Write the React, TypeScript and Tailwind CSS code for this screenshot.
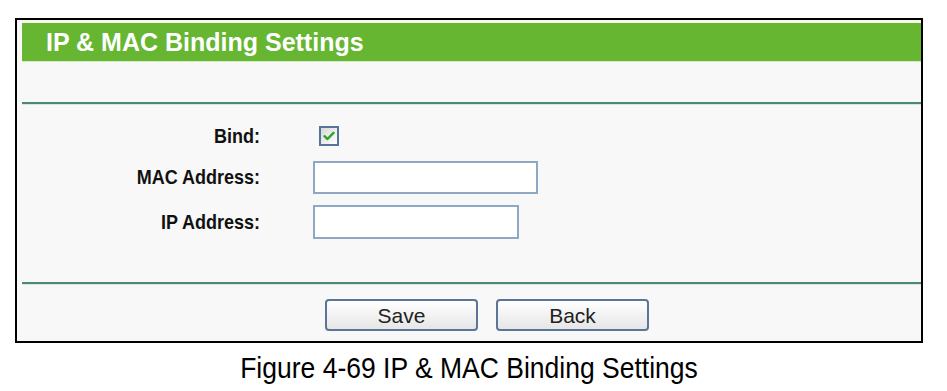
const App = () => {
    return (
        <div className="w-[947px] h-[391px] bg-white pt-[18px] pl-[15px] font-['Liberation_Sans',Arial,sans-serif]">
            {/* Router settings frame */}
            <div className="w-[908px] border-2 border-black bg-[#f8f8f8]">
                <div className="h-[3px] ml-[5px] bg-[#f6f8ea]" />
                <div className="ml-[5px] h-[38px] bg-[#66b632] flex items-center pl-[24px]">
                    <h1 className="text-white font-bold text-[25px] leading-none">IP &amp; MAC Binding Settings</h1>
                </div>
                <div className="ml-[5px] h-px bg-[#d3eac2]" />
                <div className="h-[40px]" />
                <div className="ml-[5px] h-[2px] bg-[#4b8a70]" />
                <div className="ml-[5px] h-px bg-[#d9e9e0]" />

                {/* Form rows */}
                <div className="ml-[5px] pt-[17px] pb-[43px] grid grid-cols-[238px_1fr] gap-x-[53px] gap-y-[11px] items-center">
                    <label className="text-right font-bold text-[18px] text-[#111] h-[28px] leading-[28px] scale-y-[1.15] origin-right">Bind:</label>
                    <div className="h-[28px] flex items-center">
                        <span className="ml-[6px] w-[20px] h-[20px] border-2 border-[#56759a] bg-gradient-to-br from-[#d8d8d8] to-white flex items-center justify-center">
                            <svg width="12" height="10" viewBox="0 0 12 10">
                                <path d="M1.5 5.2 L4.5 8 L10.5 1.8" fill="none" stroke="#2fa52a" strokeWidth="2.4" strokeLinecap="round" strokeLinejoin="round" />
                            </svg>
                        </span>
                    </div>
                    <label className="text-right font-bold text-[18px] text-[#111] scale-y-[1.15] origin-right">MAC Address:</label>
                    <input type="text" className="w-[225px] h-[33px] border-2 border-[#8ea7c5] bg-white outline-none" />
                    <label className="text-right font-bold text-[18px] text-[#111] scale-y-[1.15] origin-right">IP Address:</label>
                    <input type="text" className="w-[206px] h-[34px] border-2 border-[#8ea7c5] bg-white outline-none" />
                </div>

                <div className="ml-[5px] h-[2px] bg-[#4b8a70]" />
                <div className="ml-[5px] h-px bg-[#d9e9e0]" />

                {/* Buttons */}
                <div className="pl-[308px] pt-[14px] pb-[10px] flex gap-[18px]">
                    <button className="w-[153px] h-[32px] rounded-[4px] border-2 border-[#5a7596] bg-gradient-to-b from-white to-[#e6e6e6] text-[21px] text-[#222] leading-none">Save</button>
                    <button className="w-[153px] h-[32px] rounded-[4px] border-2 border-[#5a7596] bg-gradient-to-b from-white to-[#e6e6e6] text-[21px] text-[#222] leading-none">Back</button>
                </div>
            </div>

            <p className="w-[908px] text-center text-[26.5px] text-black mt-[12px] leading-none scale-y-[1.1]">
                Figure 4-69 IP &amp; MAC Binding Settings
            </p>
        </div>
    );
};

export default App;
